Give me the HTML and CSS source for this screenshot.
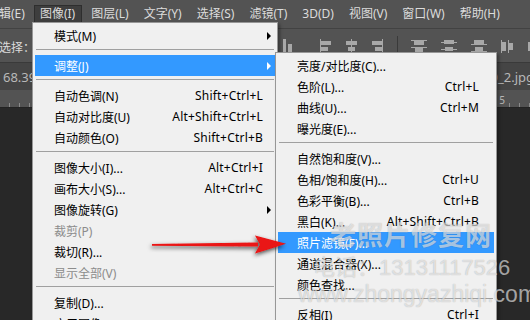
FILE: index.html
```html
<!DOCTYPE html>
<html lang="zh-CN">
<head>
<meta charset="utf-8">
<link rel="stylesheet" href="styles.css">
</head>
<body>
<div class="app">
  <div class="menubar">
    <span class="mb-item">编辑(E)</span>
    <span class="mb-item active">图像(I)</span>
    <span class="mb-item">图层(L)</span>
    <span class="mb-item">文字(Y)</span>
    <span class="mb-item">选择(S)</span>
    <span class="mb-item">滤镜(T)</span>
    <span class="mb-item">3D(D)</span>
    <span class="mb-item">视图(V)</span>
    <span class="mb-item">窗口(W)</span>
    <span class="mb-item">帮助(H)</span>
  </div>
  <div class="optionsbar">
    <span class="opt-label">选择：</span>
    <div class="opt-icons">
      <svg class="ic" width="14" height="16" viewBox="0 0 14 16"><rect x="2" y="1" width="3" height="13" fill="#a8a8a8"/><rect x="7" y="6" width="4" height="8" fill="#a8a8a8"/><rect x="0" y="14" width="14" height="1" fill="#a8a8a8"/></svg>
      <span class="sp1"></span>
      <svg class="ic" width="14" height="16" viewBox="0 0 14 16"><rect x="1" y="1" width="1" height="14" fill="#a8a8a8"/><rect x="2" y="3" width="10" height="4" fill="#a8a8a8"/><rect x="2" y="9" width="7" height="4" fill="#a8a8a8"/></svg>
      <svg class="ic" width="14" height="16" viewBox="0 0 14 16"><rect x="6" y="1" width="1" height="14" fill="#a8a8a8"/><rect x="1" y="3" width="11" height="4" fill="#a8a8a8"/><rect x="3" y="9" width="7" height="4" fill="#a8a8a8"/></svg>
      <svg class="ic" width="14" height="16" viewBox="0 0 14 16"><rect x="11" y="1" width="1" height="14" fill="#a8a8a8"/><rect x="1" y="3" width="10" height="4" fill="#a8a8a8"/><rect x="4" y="9" width="7" height="4" fill="#a8a8a8"/></svg>
      <span class="vsep"></span>
      <svg class="ic" width="18" height="16" viewBox="0 0 18 16"><rect x="1" y="2" width="16" height="1" fill="#a8a8a8"/><rect x="4" y="3" width="10" height="4" fill="#a8a8a8"/><rect x="1" y="9" width="16" height="1" fill="#a8a8a8"/><rect x="5" y="10" width="8" height="4" fill="#a8a8a8"/></svg>
      <svg class="ic" width="18" height="16" viewBox="0 0 18 16"><rect x="4" y="2" width="10" height="4" fill="#a8a8a8"/><rect x="1" y="4" width="16" height="1" fill="#a8a8a8"/><rect x="5" y="9" width="8" height="4" fill="#a8a8a8"/><rect x="1" y="11" width="16" height="1" fill="#a8a8a8"/></svg>
      <svg class="ic" width="18" height="16" viewBox="0 0 18 16"><rect x="4" y="2" width="10" height="4" fill="#a8a8a8"/><rect x="1" y="6" width="16" height="1" fill="#a8a8a8"/><rect x="5" y="9" width="8" height="4" fill="#a8a8a8"/><rect x="1" y="13" width="16" height="1" fill="#a8a8a8"/></svg>
      <svg class="ic" width="14" height="16" viewBox="0 0 14 16"><rect x="1" y="2" width="1" height="13" fill="#a8a8a8"/><rect x="2" y="4" width="4" height="9" fill="#a8a8a8"/><rect x="8" y="2" width="1" height="13" fill="#a8a8a8"/><rect x="9" y="5" width="4" height="7" fill="#a8a8a8"/></svg>
      <svg class="ic" width="14" height="16" viewBox="0 0 14 16"><rect x="2" y="4" width="4" height="9" fill="#a8a8a8"/></svg>
    </div>
  </div>
  <div class="tabbar">
    <span class="tab-left">68.39</span>
    <span class="tab-right">0_2.jpg</span>
  </div>
  <div class="ruler">
    <span class="ruler-num">5</span>
  </div>
  <div class="canvas"></div>
</div>

<div class="menu main-menu">
  <div class="mi"><span class="lbl">模式(M)</span><span class="sc"></span><span class="arr"></span></div>
  <div class="sep"></div>
  <div class="mi hl"><span class="lbl">调整(J)</span><span class="sc"></span><span class="arr"></span></div>
  <div class="sep"></div>
  <div class="mi"><span class="lbl">自动色调(N)</span><span class="sc">Shift+Ctrl+L</span></div>
  <div class="mi"><span class="lbl">自动对比度(U)</span><span class="sc">Alt+Shift+Ctrl+L</span></div>
  <div class="mi"><span class="lbl">自动颜色(O)</span><span class="sc">Shift+Ctrl+B</span></div>
  <div class="sep"></div>
  <div class="mi"><span class="lbl">图像大小(I)...</span><span class="sc">Alt+Ctrl+I</span></div>
  <div class="mi"><span class="lbl">画布大小(S)...</span><span class="sc">Alt+Ctrl+C</span></div>
  <div class="mi"><span class="lbl">图像旋转(G)</span><span class="sc"></span><span class="arr"></span></div>
  <div class="mi dis"><span class="lbl">裁剪(P)</span></div>
  <div class="mi"><span class="lbl">裁切(R)...</span></div>
  <div class="mi dis"><span class="lbl">显示全部(V)</span></div>
  <div class="sep"></div>
  <div class="mi"><span class="lbl">复制(D)...</span></div>
  <div class="mi"><span class="lbl">应用图像(Y)...</span></div>
</div>

<div class="menu sub-menu">
  <div class="mi"><span class="lbl">亮度/对比度(C)...</span></div>
  <div class="mi"><span class="lbl">色阶(L)...</span><span class="sc">Ctrl+L</span></div>
  <div class="mi"><span class="lbl">曲线(U)...</span><span class="sc">Ctrl+M</span></div>
  <div class="mi"><span class="lbl">曝光度(E)...</span></div>
  <div class="sep"></div>
  <div class="mi"><span class="lbl">自然饱和度(V)...</span></div>
  <div class="mi"><span class="lbl">色相/饱和度(H)...</span><span class="sc">Ctrl+U</span></div>
  <div class="mi"><span class="lbl">色彩平衡(B)...</span><span class="sc">Ctrl+B</span></div>
  <div class="mi"><span class="lbl">黑白(K)...</span><span class="sc">Alt+Shift+Ctrl+B</span></div>
  <div class="mi hl"><span class="lbl">照片滤镜(F)...</span></div>
  <div class="mi"><span class="lbl">通道混合器(X)...</span></div>
  <div class="mi"><span class="lbl">颜色查找...</span></div>
  <div class="sep"></div>
  <div class="mi"><span class="lbl">反相(I)</span><span class="sc">Ctrl+I</span></div>
</div>

<div class="watermark">
  <div class="wm1">老照片修复网</div>
  <div class="wm2">电话：13131117526</div>
  <div class="wm3">www.zhongyazhiqi.com</div>
</div>

<svg class="arrow" width="150" height="40" viewBox="0 0 150 40">
  <defs>
    <filter id="sh" x="-20%" y="-60%" width="140%" height="220%">
      <feDropShadow dx="-1" dy="2" stdDeviation="2.2" flood-color="#000" flood-opacity="0.7"/>
    </filter>
  </defs>
  <g filter="url(#sh)">
    <polygon points="2,13 108,11.5 108,15.5 2,14.8" fill="#ea1212"/>
    <polygon points="105,4.5 136,12.8 105,22.5 110,13.5" fill="#ea1212"/>
  </g>
</svg>
</body>
</html>
```

FILE: styles.css
```css
* { box-sizing: border-box; }
html, body { margin: 0; padding: 0; }
body {
  width: 530px;
  height: 320px;
  overflow: hidden;
  position: relative;
  background: #282828;
  font-family: "Noto Sans", "Noto Sans CJK SC", sans-serif;
  font-size: 12px;
}
.app { display: flex; flex-direction: column; height: 320px; }

.menubar {
  height: 29px;
  background: #535353;
  border-bottom: 1px solid #424242;
  display: flex;
  align-items: flex-start;
  margin-left: -21px;
  padding-top: 5px;
  white-space: nowrap;
}
.mb-item {
  color: #dcdcdc;
  padding: 0 7px 0 8px;
  height: 18px;
  line-height: 17px;
  flex: none;
}
.mb-item.active {
  background: #3e3e3e;
  border: 1px solid #2e2e2e;
  border-bottom: none;
  line-height: 15px;
  height: 18px;
  padding: 0 6px 0 5px;
  margin: 0 1px 0 2px;
}

.optionsbar {
  height: 33px;
  background: #535353;
  display: flex;
  align-items: center;
  justify-content: space-between;
  white-space: nowrap;
}
.opt-label { color: #dcdcdc; margin-left: -1px; padding-top: 2px; }
.opt-icons { display: flex; align-items: center; gap: 12px; margin-right: -10px; }
.ic { display: block; }
.vsep { width: 1px; height: 20px; background: #3a3a3a; }

.tabbar {
  height: 28px;
  background: #454545;
  border-top: 1px solid #3a3a3a;
  display: flex;
  align-items: center;
  justify-content: space-between;
  color: #b8b8b8;
  font-size: 13px;
}
.tab-left { margin-left: 3px; }
.tab-right { margin-right: -4px; }
.ruler {
  height: 18px;
  background: #535353;
  border-bottom: 1px solid #222;
  display: flex;
  justify-content: flex-end;
  align-items: flex-end;
  color: #b8b8b8;
  font-size: 10px;
  background-image: repeating-linear-gradient(90deg, transparent 0 9px, #8a8a8a 9px 10px);
  background-size: 100% 4px;
  background-repeat: no-repeat;
  background-position: bottom;
}
.ruler-num { margin-right: 25px; line-height: 14px; background: #535353; }
.canvas { flex: 1; background: #282828; }

/* menus */
.menu {
  position: absolute;
  background: #f0f0f0;
  border: 1px solid #979797;
  padding: 2px;
  color: #000;
  box-shadow: 2px 2px 3px rgba(0,0,0,0.35);
}
.main-menu { left: 32px; top: 22px; width: 246px; }
.sub-menu { left: 275px; top: 52px; width: 222px; }
.mi {
  height: 21px;
  display: flex;
  align-items: center;
  padding-left: 19px;
  white-space: nowrap;
}
.main-menu .mi { padding-right: 0; }
.sub-menu .mi { padding-right: 15px; }
.mi .lbl { flex: 1; }
.mi .sc { text-align: right; letter-spacing: 0.2px; }
.mi .arr {
  width: 12px;
  height: 21px;
  position: relative;
  flex: none;
}
.mi .arr::after {
  content: "";
  position: absolute;
  left: 4px;
  top: 7px;
  border-left: 4px solid #000;
  border-top: 4px solid transparent;
  border-bottom: 4px solid transparent;
}
.main-menu .mi:not(:has(.arr)) { padding-right: 12px; }
.mi.hl { background: #3399ff; color: #fff; }
.mi.hl .arr::after { border-left-color: #fff; }
.mi.dis { color: #8c8c8c; }
.sep {
  height: 9px;
  padding-top: 3px;
  margin: 0 1px 0 1px;
}
.sep::before {
  content: "";
  display: block;
  height: 1px;
  background: #a0a0a0;
}

.watermark {
  position: absolute;
  left: 296px;
  top: 223px;
  color: rgba(255,255,255,0.6);
  text-shadow: 0 0 1px rgba(0,0,0,0.3);
  font-family: "Liberation Sans", "Noto Sans CJK SC", sans-serif;
  white-space: nowrap;
  line-height: 1;
  pointer-events: none;
}
.wm1 { font-size: 26px; margin-left: 34px; letter-spacing: 1px; font-weight: bold; }
.wm2 { font-size: 22px; margin-left: 17px; margin-top: 8px; }
.wm3 { font-size: 23px; margin-left: 2px; margin-top: 4px; }

.arrow { position: absolute; left: 150px; top: 231px; overflow: visible; }
```
